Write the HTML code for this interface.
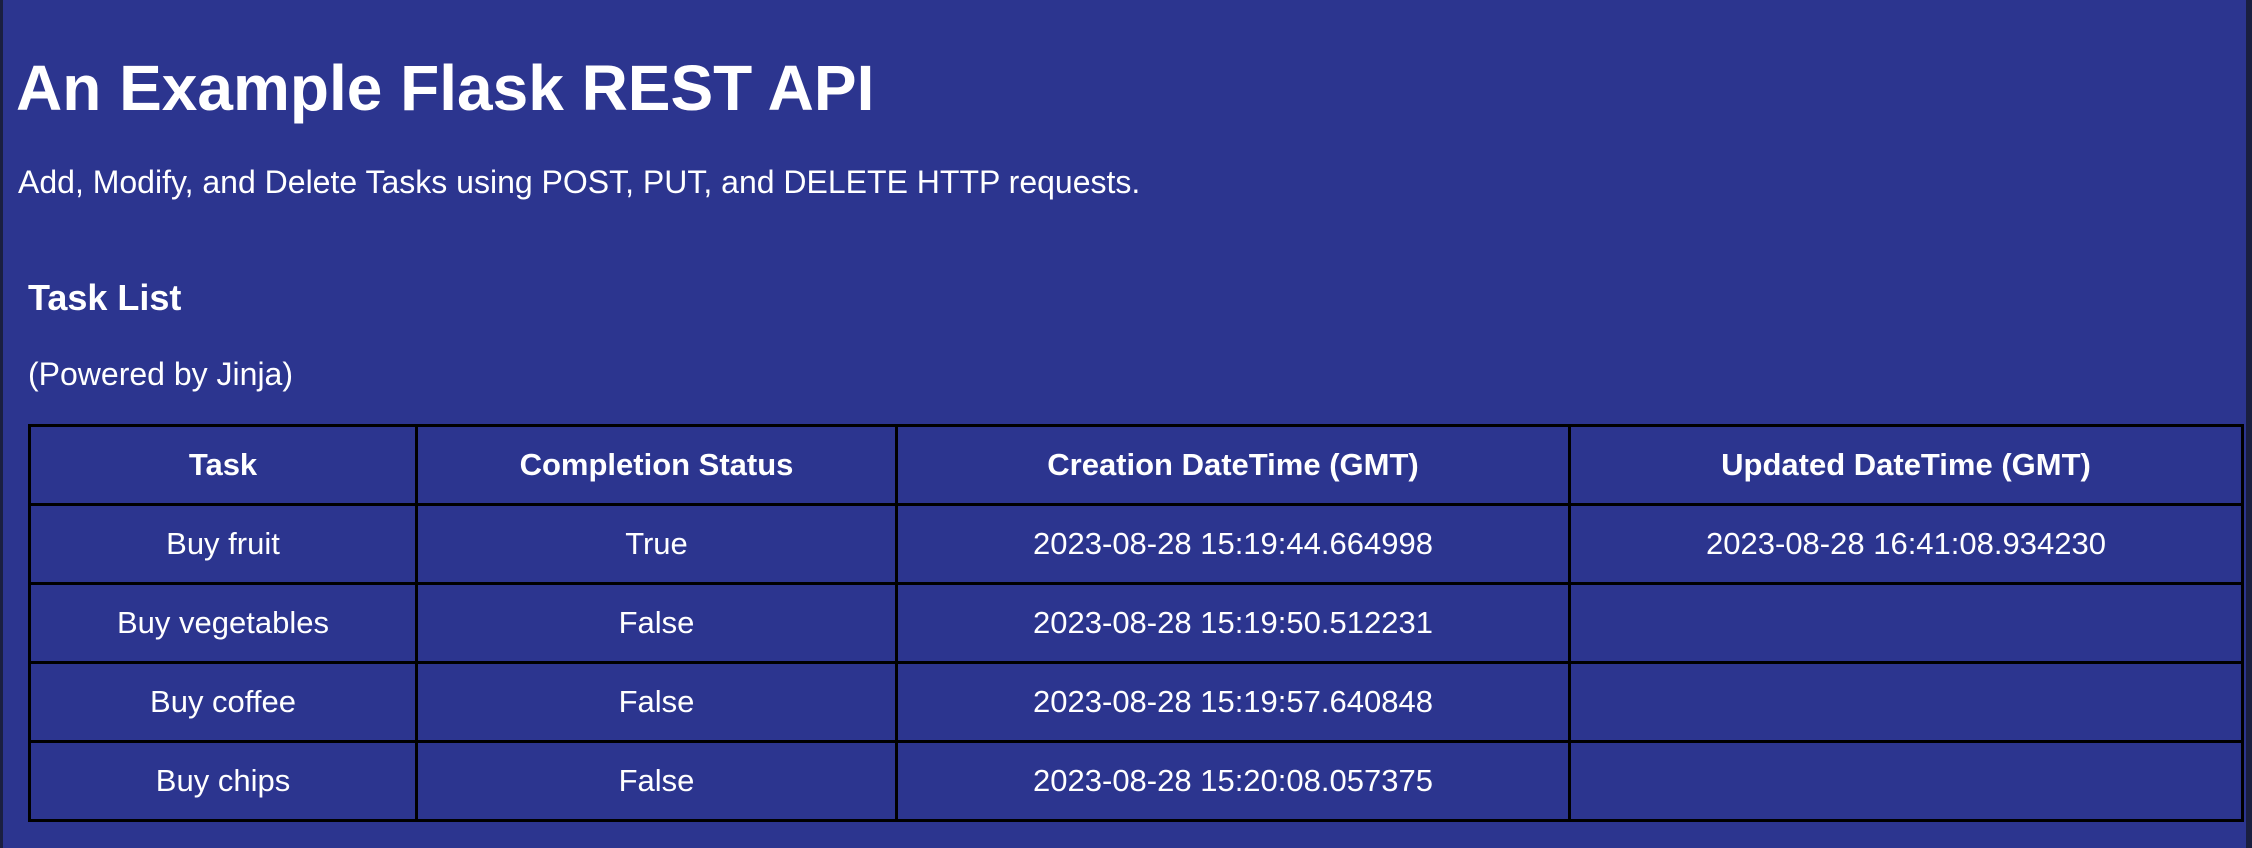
<!DOCTYPE html>
<html><head><meta charset="utf-8"><style>
html,body{margin:0;padding:0;}
body{width:2252px;height:848px;background:#2c358f;position:relative;overflow:hidden;font-family:"Liberation Sans",Arial,sans-serif;color:#fff;}
.l{position:absolute;left:0;top:0;width:3px;height:848px;background:#1a1f40;}
.r{position:absolute;right:0;top:0;width:6px;height:848px;background:#1a1f40;}
.t{position:absolute;white-space:nowrap;line-height:1;}
table{position:absolute;left:28px;top:424px;border-collapse:collapse;table-layout:fixed;width:2213px;}
td,th{border:3px solid #000;height:76px;padding:0;text-align:center;font-size:31px;}
th{font-weight:bold;}
</style></head><body>
<div class="l"></div><div class="r"></div>
<div class="t" style="left:16px;top:56px;font-size:64px;font-weight:bold;">An Example Flask REST API</div>
<div class="t" style="left:18px;top:166px;font-size:32px;">Add, Modify, and Delete Tasks using POST, PUT, and DELETE HTTP requests.</div>
<div class="t" style="left:28px;top:280px;font-size:36px;font-weight:bold;">Task List</div>
<div class="t" style="left:28px;top:358px;font-size:32px;">(Powered by Jinja)</div>
<table>
<colgroup><col style="width:387px"><col style="width:480px"><col style="width:673px"><col style="width:673px"></colgroup>
<tr><th>Task</th><th>Completion Status</th><th>Creation DateTime (GMT)</th><th>Updated DateTime (GMT)</th></tr>
<tr><td>Buy fruit</td><td>True</td><td>2023-08-28 15:19:44.664998</td><td>2023-08-28 16:41:08.934230</td></tr>
<tr><td>Buy vegetables</td><td>False</td><td>2023-08-28 15:19:50.512231</td><td></td></tr>
<tr><td>Buy coffee</td><td>False</td><td>2023-08-28 15:19:57.640848</td><td></td></tr>
<tr><td>Buy chips</td><td>False</td><td>2023-08-28 15:20:08.057375</td><td></td></tr>
</table>
</body></html>
